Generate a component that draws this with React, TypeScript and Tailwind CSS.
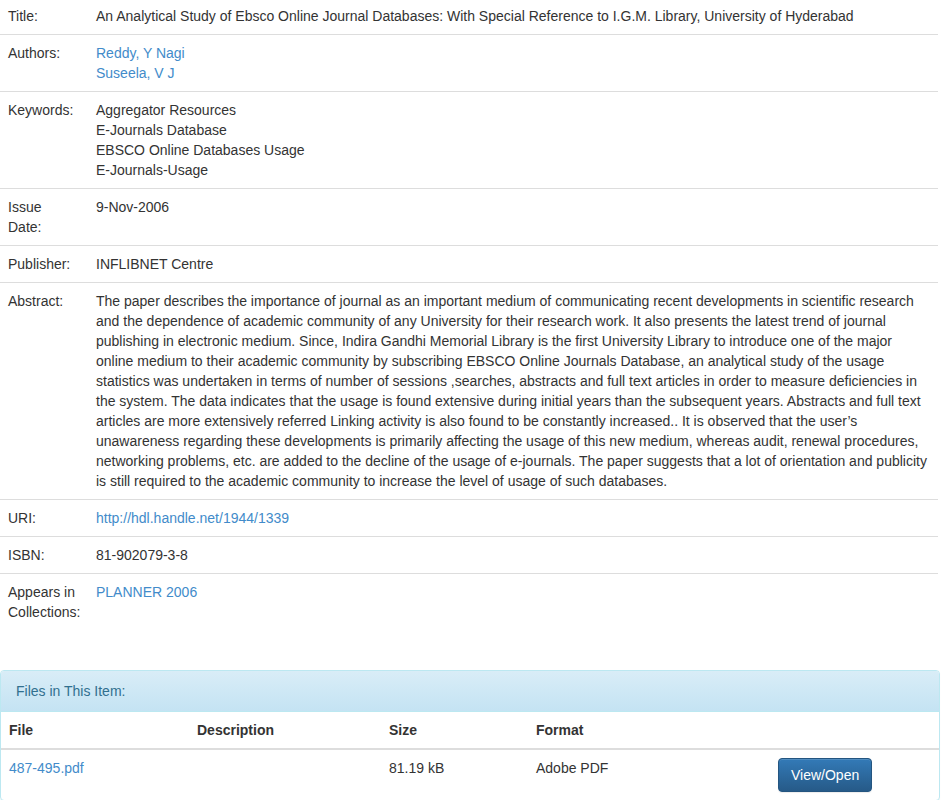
import React from 'react';

const link = 'text-[#428bca] hover:underline';

type Row = { label: React.ReactNode; value: React.ReactNode };

const rows: Row[] = [
  {
    label: 'Title:',
    value:
      'An Analytical Study of Ebsco Online Journal Databases: With Special Reference to I.G.M. Library, University of Hyderabad',
  },
  {
    label: 'Authors:',
    value: (
      <>
        <a href="#" className={link}>Reddy, Y Nagi</a>
        <br />
        <a href="#" className={link}>Suseela, V J</a>
      </>
    ),
  },
  {
    label: 'Keywords:',
    value: (
      <>
        Aggregator Resources
        <br />
        E-Journals Database
        <br />
        EBSCO Online Databases Usage
        <br />
        E-Journals-Usage
      </>
    ),
  },
  {
    label: (
      <>
        Issue
        <br />
        Date:
      </>
    ),
    value: '9-Nov-2006',
  },
  { label: 'Publisher:', value: 'INFLIBNET Centre' },
  {
    label: 'Abstract:',
    value:
      "The paper describes the importance of journal as an important medium of communicating recent developments in scientific research and the dependence of academic community of any University for their research work. It also presents the latest trend of journal publishing in electronic medium. Since, Indira Gandhi Memorial Library is the first University Library to introduce one of the major online medium to their academic community by subscribing EBSCO Online Journals Database, an analytical study of the usage statistics was undertaken in terms of number of sessions ,searches, abstracts and full text articles in order to measure deficiencies in the system. The data indicates that the usage is found extensive during initial years than the subsequent years. Abstracts and full text articles are more extensively referred Linking activity is also found to be constantly increased.. It is observed that the user\u2019s unawareness regarding these developments is primarily affecting the usage of this new medium, whereas audit, renewal procedures, networking problems, etc. are added to the decline of the usage of e-journals. The paper suggests that a lot of orientation and publicity is still required to the academic community to increase the level of usage of such databases.",
  },
  {
    label: 'URI:',
    value: <a href="#" className={link}>http://hdl.handle.net/1944/1339</a>,
  },
  { label: 'ISBN:', value: '81-902079-3-8' },
  {
    label: 'Appears in Collections:',
    value: <a href="#" className={link}>PLANNER 2006</a>,
  },
];

export default function App() {
  return (
    <div
      className="w-[942px] bg-white text-[14px] leading-[20px] text-[#333]"
      style={{ fontFamily: '"Liberation Sans", Arial, Helvetica, sans-serif' }}
    >
      {/* item metadata */}
      <table className="-mt-[3px] w-[938px] table-fixed border-collapse">
        <tbody>
          {rows.map((r, i) => (
            <tr key={i} className="border-t border-[#ddd]">
              <td className="w-[88px] p-2 align-top">{r.label}</td>
              <td className="p-2 align-top">{r.value}</td>
            </tr>
          ))}
        </tbody>
      </table>

      {/* files panel */}
      <div className="mt-[40px] w-[940px] rounded-[4px] border border-[#bce8f1] shadow-[0_1px_1px_rgba(0,0,0,0.05)]">
        <div className="rounded-t-[3px] border-b border-[#bce8f1] bg-gradient-to-b from-[#d9edf7] to-[#c4e3f3] px-[15px] py-[10px] text-[#31708f]">
          Files in This Item:
        </div>
        <table className="w-full border-collapse">
          <thead>
            <tr className="border-b-2 border-[#ddd] text-left">
              <th className="w-[188px] p-2 font-bold">File</th>
              <th className="w-[192px] p-2 font-bold">Description</th>
              <th className="w-[147px] p-2 font-bold">Size</th>
              <th className="w-[242px] p-2 font-bold">Format</th>
              <th className="p-2"></th>
            </tr>
          </thead>
          <tbody>
            <tr>
              <td className="p-2 align-top">
                <a href="#" className={link}>487-495.pdf</a>
              </td>
              <td className="p-2 align-top"></td>
              <td className="p-2 align-top">81.19 kB</td>
              <td className="p-2 align-top">Adobe PDF</td>
              <td className="p-2 align-top">
                <button className="rounded-[4px] border border-[#245580] bg-gradient-to-b from-[#337ab7] to-[#265a88] px-3 py-[6px] text-white shadow-[inset_0_1px_0_rgba(255,255,255,0.15),0_1px_1px_rgba(0,0,0,0.075)]">
                  View/Open
                </button>
              </td>
            </tr>
          </tbody>
        </table>
      </div>
    </div>
  );
}
